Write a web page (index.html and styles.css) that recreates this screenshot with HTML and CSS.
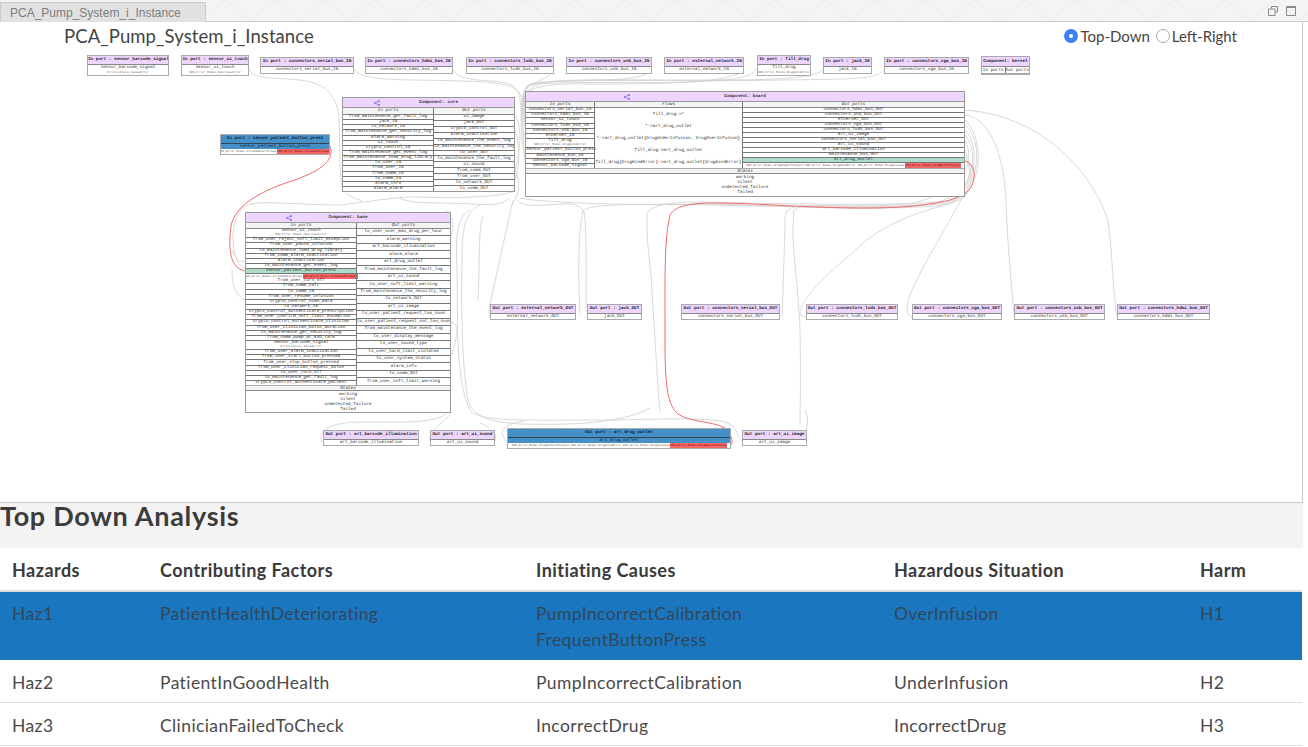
FILE: index.html
```html
<!DOCTYPE html>
<html lang="en">
<head>
<meta charset="utf-8">
<title>PCA_Pump_System_i_Instance</title>
<link rel="stylesheet" href="styles.css">
</head>
<body>
<svg class="defs" width="0" height="0" aria-hidden="true">
  <symbol id="tree" viewBox="0 0 8 8">
    <path d="M2 4H4M4 1.5V6.5H6M4 1.5H6" fill="none" stroke="#7a6cf0" stroke-width=".7"/>
    <rect x="0" y="3" width="2.2" height="2" fill="#6a5cf0"/>
    <rect x="5.6" y="0.5" width="2.2" height="2" fill="#6a5cf0"/>
    <rect x="5.6" y="5.5" width="2.2" height="2" fill="#6a5cf0"/>
  </symbol>
</svg>

<header class="tabbar">
  <div class="tab">PCA_Pump_System_i_Instance</div>
  <div class="winbtns">
    <svg class="winicon" viewBox="0 0 10 10"><path d="M3.5 2.5V.5H9.5V6H7M.5 3H7V9.5H.5Z" fill="none" stroke="#8a8a8a"/></svg>
    <svg class="winicon" viewBox="0 0 10 10"><path d="M.5 .5H9.5V9.5H.5Z M.5 1.5H9.5" fill="none" stroke="#8a8a8a"/></svg>
  </div>
</header>

<section class="panel">
  <div class="toolbar">
    <h1 class="title">PCA_Pump_System_i_Instance</h1>
    <div class="radios">
      <label class="radio-item"><span class="radio on"></span>Top-Down</label>
      <label class="radio-item"><span class="radio"></span>Left-Right</label>
    </div>
  </div>

  <div class="canvas">
    <svg class="edges" viewBox="0 50 1303 440">
      <g class="edge">
        <path d="M249 68C252 80 270 77 300 80C328 83 338 98 339 120C340 140 339 170 342 188C346 196 355 198 362 201"/>
        <path d="M354 69C362 82 400 79 460 81C500 82 520 84 522 100C524 125 522 150 526 165"/>
        <path d="M453 70C462 84 490 78 510 84C520 88 521 100 521 118C521 135 523 150 526 158"/>
        <path d="M553 71C547 82 528 80 523 95C520 112 522 130 526 140"/>
        <path d="M652 70C642 82 600 79 560 81C532 83 524 90 523 105C522 118 524 125 526 128"/>
        <path d="M744 70C732 84 650 84 590 84C540 83 526 88 524 100C523 110 524 118 526 122"/>
        <path d="M757 68C752 78 735 80 690 82C620 84 545 80 528 86C522 92 522 105 526 114"/>
        <path d="M823 70C812 80 760 80 690 80C620 80 540 78 527 86C522 92 523 100 526 110"/>
        <path d="M884 70C876 80 850 79 780 80C700 82 560 78 530 84C523 90 523 100 526 135"/>
        <path d="M515 190C513 196 460 199 418 197C400 196 360 203 340 205C300 205 260 200 248 205C232 212 231 240 235 255C238 265 243 268 246 268"/>
        <path d="M510 198C500 206 490 205 470 204C450 202 410 205 400 198"/>
        <path d="M513 200L490 304C488 312 489 316 491 317"/>
        <path d="M483 216C478 230 480 260 478 300"/>
        <path d="M480 205C466 212 462 225 462 260C461 300 462 370 468 400C474 418 490 422 520 424C560 425 620 425 650 408"/>
        <path d="M470 210C455 218 456 240 457 270C458 320 455 380 470 410C480 422 520 420 600 420C650 420 710 416 728 423C738 428 738 438 742 441"/>
        <path d="M451 405C450 418 430 422 400 422C370 422 345 421 332 426C322 430 319 436 322 442"/>
        <path d="M451 412C448 420 440 422 434 430C430 436 428 440 431 442"/>
        <path d="M495 441C498 436 492 428 480 423"/>
        <path d="M507 441C498 434 500 424 525 421"/>
        <path d="M451 322C462 325 455 340 452 355"/>
        <path d="M451 236C455 225 452 215 445 210"/>
        <path d="M245 300C235 295 232 285 232 270"/>
        <path d="M245 262C238 262 236 258 232 250"/>
        <path d="M515 115C522 125 521 150 515 170M515 130C520 145 520 165 515 180"/>
        <path d="M515 170C522 185 518 195 512 205"/>
        <path d="M517 200C525 208 540 205 565 204C575 203 582 207 584 212C587 230 586 280 586 312M583 212C578 230 578 280 580 313"/>
        <path d="M965 140C975 160 968 190 910 204C800 212 680 200 600 206C585 208 582 210 582 214"/>
        <path d="M965 120C982 135 985 180 960 200C900 207 800 204 700 202C670 202 650 205 647 214C646 240 650 260 652 290C655 340 658 390 660 412"/>
        <path d="M965 125C982 140 982 180 955 202C900 210 850 204 800 206C785 208 785 212 785 225C784 260 783 290 782 316"/>
        <path d="M965 130C980 145 978 185 950 204C920 210 820 208 800 207C790 210 795 212 793 225C792 250 798 280 800 330C801 380 800 410 800 425"/>
        <path d="M965 135C978 150 976 185 945 205C910 215 880 225 850 255C820 280 802 300 800 312C800 316 803 317 806 316"/>
        <path d="M965 150C972 168 975 185 961 200C945 230 925 260 910 295C905 308 907 316 912 317"/>
        <path d="M965 110C1040 115 1090 170 1106 215C1112 230 1112 290 1117 316"/>
        <path d="M965 115C995 118 1005 170 1006 200C1007 240 1012 290 1014 315"/>
        <path d="M965 155C975 175 970 195 930 204C860 212 760 204 700 204C650 206 540 203 520 198"/>
        <path d="M807 441C802 432 812 425 805 410"/>
      </g>
      <g class="edge-red">
        <path d="M330 146C335 160 322 170 295 180C262 190 235 205 231 226C228 250 230 268 245 271"/>
        <path d="M965 161C975 164 976 175 972 185C968 195 955 202 913 206C850 212 770 203 713 203C690 203 675 206 670 215C664 240 665 280 665 340C665 390 668 405 678 414C692 424 720 420 729 432C732 438 733 442 731 445"/>
      </g>
    </svg>

    <div class="node n-barcode-in"><div class="nh">In port : sensor_barcode_signal</div><div class="nb">sensor_barcode_signal<small>ErrorLibrary.ValueError</small></div></div>
    <div class="node n-touch-in"><div class="nh">In port : sensor_ui_touch</div><div class="nb">sensor_ui_touch<small>SOS_Error_Model.SpuriousError</small></div></div>
    <div class="node n-serial-in"><div class="nh">In port : connectors_serial_bus_IN</div><div class="nb">connectors_serial_bus_IN</div></div>
    <div class="node n-hdmi-in"><div class="nh">In port : connectors_hdmi_bus_IN</div><div class="nb">connectors_hdmi_bus_IN</div></div>
    <div class="node n-lvds-in"><div class="nh">In port : connectors_lvds_bus_IN</div><div class="nb">connectors_lvds_bus_IN</div></div>
    <div class="node n-usb-in"><div class="nh">In port : connectors_usb_bus_IN</div><div class="nb">connectors_usb_bus_IN</div></div>
    <div class="node n-ext-in"><div class="nh">In port : external_network_IN</div><div class="nb">external_network_IN</div></div>
    <div class="node n-fill-in"><div class="nh">In port : fill_drug</div><div class="nb">fill_drug<small>SOS_Error_Model.DrugKindError</small></div></div>
    <div class="node n-jack-in"><div class="nh">In port : jack_IN</div><div class="nb">jack_IN</div></div>
    <div class="node n-vga-in"><div class="nh">In port : connectors_vga_bus_IN</div><div class="nb">connectors_vga_bus_IN</div></div>
    <div class="node n-kernel"><div class="nh">Component: kernel</div><div class="kports"><span>In ports</span><span>Out ports</span></div></div>

    <div class="node selected n-button"><div class="nh">In port : sensor_patient_button_press</div><div class="nb hl">sensor_patient_button_press</div><div class="errs"><span>SOS_Error_Model.FirstBatteryPress</span><span class="bad">SOS_Error_Model.FrequentPresses</span></div></div>

    <div class="node comp n-core">
      <div class="ch"><svg class="tree"><use href="#tree"/></svg><b>Component: core</b></div>
      <div class="cols core-cols">
        <div class="col"><div class="ph">In ports</div>
          <div class="r">from_maintenance_get_fault_log</div><div class="r">jack_IN</div><div class="r">to_network_IN</div><div class="r">from_maintenance_get_security_log</div><div class="r">alarm_warning</div><div class="r">ui_touch</div><div class="r">crypto_control_IN</div><div class="r">from_maintenance_get_event_log</div><div class="r">from_maintenance_load_drug_library</div><div class="r">to_user_IN</div><div class="r">from_user_IN</div><div class="r">from_comm_IN</div><div class="r">to_comm_IN</div><div class="r">alarm_info</div><div class="r">alarm_alarm</div>
        </div>
        <div class="col"><div class="ph">Out ports</div>
          <div class="r">ui_image</div><div class="r">jack_OUT</div><div class="r">crypto_control_OUT</div><div class="r">alarm_inactivation</div><div class="r">to_maintenance_the_event_log</div><div class="r">to_maintenance_the_security_log</div><div class="r">to_user_OUT</div><div class="r">to_maintenance_the_fault_log</div><div class="r">ui_sound</div><div class="r">from_comm_OUT</div><div class="r">from_user_OUT</div><div class="r">to_network_OUT</div><div class="r">to_comm_OUT</div>
        </div>
      </div>
    </div>

    <div class="node comp n-board">
      <div class="ch"><svg class="tree"><use href="#tree"/></svg><b>Component: board</b></div>
      <div class="cols board-cols">
        <div class="col"><div class="ph">In ports</div>
          <div class="r">connectors_serial_bus_IN</div><div class="r">connectors_hdmi_bus_IN</div><div class="r">sensor_ui_touch</div><div class="r">connectors_lvds_bus_IN</div><div class="r">connectors_usb_bus_IN</div><div class="r">ethernet_IN</div><div class="r two">fill_drug<small>SOS_Error_Model.DrugKindError</small></div><div class="r">sensor_patient_button_press</div><div class="r">maintenance_bus_IN</div><div class="r">connectors_vga_bus_IN</div><div class="r">sensor_barcode_signal</div>
        </div>
        <div class="col"><div class="ph">Flows</div>
          <div class="f">fill_drug-&gt;*</div><div class="f">*-&gt;art_drug_outlet</div><div class="f">*-&gt;art_drug_outlet{DrugUnderInfusion, DrugOverInfusion}</div><div class="f">fill_drug-&gt;art_drug_outlet</div><div class="f">fill_drug{DrugKindError}-&gt;art_drug_outlet{DrugKindError}</div>
        </div>
        <div class="col"><div class="ph">Out ports</div>
          <div class="r">connectors_hdmi_bus_OUT</div><div class="r">connectors_usb_bus_OUT</div><div class="r">ethernet_OUT</div><div class="r">connectors_vga_bus_OUT</div><div class="r">connectors_lvds_bus_OUT</div><div class="r">art_ui_image</div><div class="r">connectors_serial_bus_OUT</div><div class="r">art_ui_sound</div><div class="r">art_barcode_illumination</div><div class="r">maintenance_bus_OUT</div><div class="r green">art_drug_outlet</div><div class="errs"><span>SOS_Error_Model.DrugUnderInfusion SOS_Error_Model.DrugKindError SOS_Error_Model.DrugStopped</span><span class="bad">SOS_Error_Model.DrugOverInfusion</span></div>
        </div>
      </div>
      <div class="ph states">States</div>
      <div class="st">working<br>silent<br>undetected_failure<br>failed</div>
    </div>

    <div class="node comp n-base">
      <div class="ch"><svg class="tree"><use href="#tree"/></svg><b>Component: base</b></div>
      <div class="cols base-cols">
        <div class="col"><div class="ph">In ports</div>
          <div class="r two">sensor_ui_touch<small>SOS_Error_Model.SpuriousError</small></div><div class="r">from_user_reject_soft_limit_exception</div><div class="r">from_user_pause_infusion</div><div class="r">to_maintenance_load_drug_library</div><div class="r">from_comm_alarm_inactivation</div><div class="r">alarm_inactivation</div><div class="r">to_maintenance_get_event_log</div><div class="r green">sensor_patient_button_press</div><div class="errs"><span>SOS_Error_Model.FirstBatteryPress</span><span class="bad">SOS_Error_Model.FrequentPresses</span></div><div class="r">from_user_turn_off</div><div class="r">from_comm_halt</div><div class="r">to_comm_IN</div><div class="r">from_user_resume_infusion</div><div class="r">crypto_control_scan_data</div><div class="r">to_network_IN</div><div class="r">crypto_control_authenticate_prescription</div><div class="r">from_user_confirm_soft_limit_exception</div><div class="r">crypto_control_authenticate_clinician</div><div class="r">from_user_clinician_bolus_duration</div><div class="r">to_maintenance_get_security_log</div><div class="r">from_comm_pump_at_KVO_rate</div><div class="r two">sensor_barcode_signal<small>ErrorLibrary.ValueError</small></div><div class="r">from_user_alarm_inactivation</div><div class="r">from_user_start_button_pressed</div><div class="r">from_user_stop_button_pressed</div><div class="r">from_user_clinician_request_bolus</div><div class="r">to_user_turn_off</div><div class="r">to_maintenance_get_fault_log</div><div class="r">crypto_control_authenticate_patient</div>
        </div>
        <div class="col"><div class="ph">Out ports</div>
          <div class="r">to_user_over_max_drug_per_hour</div><div class="r">alarm_warning</div><div class="r">art_barcode_illumination</div><div class="r">alarm_alarm</div><div class="r">art_drug_outlet</div><div class="r">from_maintenance_the_fault_log</div><div class="r">art_ui_sound</div><div class="r">to_user_soft_limit_warning</div><div class="r">from_maintenance_the_security_log</div><div class="r">to_network_OUT</div><div class="r">art_ui_image</div><div class="r">to_user_patient_request_too_soon</div><div class="r">to_user_patient_request_not_too_soon</div><div class="r">from_maintenance_the_event_log</div><div class="r">to_user_display_message</div><div class="r">to_user_sound_type</div><div class="r">to_user_hard_limit_violated</div><div class="r">to_user_system_status</div><div class="r">alarm_info</div><div class="r">to_comm_OUT</div><div class="r">from_user_soft_limit_warning</div>
        </div>
      </div>
      <div class="ph states">States</div>
      <div class="st">working<br>silent<br>undetected_failure<br>failed</div>
    </div>

    <div class="node n-ext-out"><div class="nh">Out port : external_network_OUT</div><div class="nb">external_network_OUT</div></div>
    <div class="node n-jack-out"><div class="nh">Out port : jack_OUT</div><div class="nb">jack_OUT</div></div>
    <div class="node n-serial-out"><div class="nh">Out port : connectors_serial_bus_OUT</div><div class="nb">connectors_serial_bus_OUT</div></div>
    <div class="node n-lvds-out"><div class="nh">Out port : connectors_lvds_bus_OUT</div><div class="nb">connectors_lvds_bus_OUT</div></div>
    <div class="node n-vga-out"><div class="nh">Out port : connectors_vga_bus_OUT</div><div class="nb">connectors_vga_bus_OUT</div></div>
    <div class="node n-usb-out"><div class="nh">Out port : connectors_usb_bus_OUT</div><div class="nb">connectors_usb_bus_OUT</div></div>
    <div class="node n-hdmi-out"><div class="nh">Out port : connectors_hdmi_bus_OUT</div><div class="nb">connectors_hdmi_bus_OUT</div></div>

    <div class="node n-illum-out"><div class="nh">Out port : art_barcode_illumination</div><div class="nb">art_barcode_illumination</div></div>
    <div class="node n-sound-out"><div class="nh">Out port : art_ui_sound</div><div class="nb">art_ui_sound</div></div>
    <div class="node selected n-drug-out"><div class="nh">Out port : art_drug_outlet</div><div class="nb hl">art_drug_outlet</div><div class="errs"><span>SOS_Error_Model.DrugUnderInfusion SOS_Error_Model.DrugKindError SOS_Error_Model.DrugStopped</span><span class="bad">SOS_Error_Model.DrugOverInfusion</span></div></div>
    <div class="node n-image-out"><div class="nh">Out port : art_ui_image</div><div class="nb">art_ui_image</div></div>
  </div>
</section>

<section class="analysis">
  <h2 class="heading">Top Down Analysis</h2>
  <table class="hazards">
    <colgroup><col class="c1"><col class="c2"><col class="c3"><col class="c4"><col class="c5"></colgroup>
    <thead>
      <tr><th>Hazards</th><th>Contributing Factors</th><th>Initiating Causes</th><th>Hazardous Situation</th><th>Harm</th></tr>
    </thead>
    <tbody>
      <tr class="active"><td>Haz1</td><td>PatientHealthDeteriorating</td><td>PumpIncorrectCalibration<br>FrequentButtonPress</td><td>OverInfusion</td><td>H1</td></tr>
      <tr><td>Haz2</td><td>PatientInGoodHealth</td><td>PumpIncorrectCalibration</td><td>UnderInfusion</td><td>H2</td></tr>
      <tr><td>Haz3</td><td>ClinicianFailedToCheck</td><td>IncorrectDrug</td><td>IncorrectDrug</td><td>H3</td></tr>
    </tbody>
  </table>
</section>
</body>
</html>
```
FILE: styles.css
```css
* { box-sizing: border-box; }
html, body { margin: 0; padding: 0; }
body {
  width: 1308px;
  height: 747px;
  overflow: hidden;
  background: #fff;
  color: #444;
  font-family: Lato, "Noto Sans", sans-serif;
}
.defs { position: absolute; }

/* Tab strip */
.tabbar {
  height: 22px;
  padding-top: 2px;
  display: flex;
  justify-content: space-between;
  border-bottom: 1px solid #ccc;
  background-color: #f4f4f4;
  background-image: url("data:image/svg+xml,%3Csvg xmlns='http://www.w3.org/2000/svg' width='50' height='20'%3E%3Cpath d='M0 20L25 0L50 20' fill='none' stroke='%23ebebeb'/%3E%3C/svg%3E");
}
.tab {
  width: 206px;
  height: 20px;
  padding: 3px 0 0 9px;
  background: #e1e1e1;
  border: 1px solid #ccc;
  border-bottom: 0;
  color: #7d7d7d;
  font: 12px/14px "Liberation Sans", sans-serif;
}
.winbtns { display: flex; gap: 8px; padding: 4px 12px 0 0; }
.winicon { width: 10px; height: 10px; }

/* Diagram panel */
.panel {
  width: 1303px;
  height: 480px;
  border-right: 1px solid #ccc;
  background: #fff;
}
.toolbar {
  height: 28px;
  padding: 0 65px 0 64px;
  display: flex;
  justify-content: space-between;
  align-items: center;
}
.title { margin: 0; font-size: 18.5px; font-weight: 400; color: #444; letter-spacing: .08px; }
.radios { display: flex; gap: 6px; }
.radio-item { display: flex; align-items: center; gap: 2px; font-size: 15px; color: #444; }
.radio { width: 14px; height: 14px; border-radius: 50%; border: 1px solid #aaa; background: #fff; }
.radio.on { border: 5px solid #3b82f6; }

.canvas { position: relative; height: 440px; }
.edges { position: absolute; left: 0; top: 0; width: 1303px; height: 440px; }
.edge path { fill: none; stroke: #cfcfcf; stroke-width: .8; }
.edge-red path { fill: none; stroke: #f26a6a; stroke-width: 1; }

/* Graph nodes */
.node {
  position: absolute;
  background: #fff;
  border: 1px solid #aaa;
  font: 4.35px/5px "Liberation Mono", monospace;
  text-rendering: geometricPrecision;
  color: #333;
  text-align: center;
  white-space: nowrap;
  overflow: hidden;
}
.nh {
  height: 9px;
  line-height: 8px;
  background: #eed5fd;
  border-bottom: 1px solid #888;
  font-weight: 700;
  color: #222;
}
.nb { line-height: 6px; }
.nb small, .r small { display: block; font-size: 3px; line-height: 4px; color: #666; }
.selected .nh, .selected .nb.hl { background: #4690c8; color: #123; }
.selected .nh { border-bottom-color: #345; }
.selected .nb.hl { height: 5px; line-height: 5px; }
.errs { display: flex; flex: none; justify-content: center; align-items: center; height: 5px; font-size: 2.9px; line-height: 5px; background: #fff; color: #555; }
.errs .bad { background: #f56565; color: #611; flex: none; }
.errs span { padding: 0 .5px; }

.comp { border-color: #999; }
.ch {
  height: 10px;
  position: relative;
  background: #eed5fd;
  border-bottom: 1px solid #999;
  font-weight: 700;
  line-height: 9px;
}
.tree { position: absolute; top: 2px; width: 6px; height: 6px; }
.cols { display: grid; grid-template-rows: minmax(0, 1fr); }
.col { display: flex; flex-direction: column; min-width: 0; min-height: 0; border-left: 1px solid #777; }
.col:first-child { border-left: 0; }
.ph { height: 6px; line-height: 6px; background: #f4f4f4; border-bottom: 1px solid #888; font-style: italic; flex: none; }
.r { flex: 1 1 0; min-height: 0; border-bottom: 1px solid #777; display: flex; flex-direction: column; justify-content: center; line-height: 4px; }
.r:last-child { border-bottom: 0; }
.r.two { flex-grow: 2; }
.r.green { background: #aedccb; }
.f { flex: 1 1 0; display: flex; align-items: center; justify-content: center; }
.states { border-top: 1px solid #aaa; }
.st { line-height: 5px; padding-top: 1px; }

.core-cols { grid-template-columns: 90px 1fr; height: 83px; }
.core-cols .ph { height: 7px; }
.board-cols { grid-template-columns: 68px 148px 1fr; height: 66px; }
.base-cols { grid-template-columns: 110px 1fr; height: 162px; }
.n-board .tree { left: 98px; }
.n-core .tree { left: 31px; }
.n-base .tree { left: 40px; }
.n-core .ch b, .n-board .ch b, .n-base .ch b { position: relative; }
.n-core .ch b { left: 10px; }
.n-board .ch b { left: 0; }
.n-base .ch b { left: 0; }

.kports { display: flex; height: 8px; line-height: 7px; border-bottom: 2px solid #aaa; }
.kports span { flex: 1; border-left: 1px solid #777; }
.kports span:first-child { border-left: 0; }
.n-kernel .nh { height: 10px; line-height: 9px; }

/* node places on the canvas */
.n-barcode-in { left: 87px; top: 5px; width: 82px; height: 21px; }
.n-touch-in { left: 181px; top: 5px; width: 68px; height: 21px; }
.n-serial-in { left: 260px; top: 7px; width: 94px; height: 17px; }
.n-hdmi-in { left: 365px; top: 7px; width: 88px; height: 17px; }
.n-lvds-in { left: 466px; top: 7px; width: 88px; height: 17px; }
.n-usb-in { left: 566px; top: 7px; width: 86px; height: 17px; }
.n-ext-in { left: 664px; top: 7px; width: 80px; height: 17px; }
.n-fill-in { left: 757px; top: 5px; width: 54px; height: 21px; }
.n-jack-in { left: 823px; top: 7px; width: 49px; height: 17px; }
.n-vga-in { left: 884px; top: 7px; width: 85px; height: 17px; }
.n-kernel { left: 981px; top: 6px; width: 49px; height: 19px; }
.n-button { left: 220px; top: 84px; width: 110px; height: 21px; }
.n-core { left: 342px; top: 47px; width: 173px; height: 95px; }
.n-board { left: 525px; top: 41px; width: 440px; height: 106px; }
.n-base { left: 245px; top: 162px; width: 206px; height: 201px; }
.n-ext-out { left: 490px; top: 254px; width: 86px; height: 16px; }
.n-jack-out { left: 587px; top: 254px; width: 55px; height: 16px; }
.n-serial-out { left: 681px; top: 254px; width: 99px; height: 16px; }
.n-lvds-out { left: 806px; top: 254px; width: 92px; height: 16px; }
.n-vga-out { left: 912px; top: 254px; width: 90px; height: 16px; }
.n-usb-out { left: 1014px; top: 254px; width: 91px; height: 16px; }
.n-hdmi-out { left: 1117px; top: 254px; width: 93px; height: 16px; }
.n-illum-out { left: 323px; top: 380px; width: 96px; height: 16px; }
.n-sound-out { left: 430px; top: 380px; width: 65px; height: 16px; }
.n-drug-out { left: 507px; top: 378px; width: 224px; height: 21px; }
.n-image-out { left: 742px; top: 380px; width: 65px; height: 16px; }

/* Analysis table */
.analysis { width: 1303px; }
.heading {
  height: 46px;
  margin: 0;
  background: #f3f3f3;
  border-top: 1px solid #ccc;
  font-size: 27px;
  font-weight: 700;
  line-height: 26px;
  color: #3c3c3c;
  letter-spacing: .7px;
}
.hazards { width: 1302px; table-layout: fixed; border-collapse: separate; border-spacing: 0; background: #fff; font-size: 17.5px; line-height: 26px; letter-spacing: .4px; }
.c1 { width: 148px; }
.c2 { width: 376px; }
.c3 { width: 358px; }
.c4 { width: 306px; }
.hazards th { height: 44px; padding: 2px 0 0 12px; text-align: left; font-size: 18px; letter-spacing: .45px; font-weight: 700; color: #3a3a3a; border-bottom: 2px solid #ddd; }
.hazards td { height: 43px; padding: 10px 0 6px 12px; vertical-align: top; border-bottom: 1px solid #ddd; color: #4a4a4a; }
.hazards .active td { height: 68px; background: #1976bf; color: #33475b; padding-top: 9px; border-bottom: 0; }
```
